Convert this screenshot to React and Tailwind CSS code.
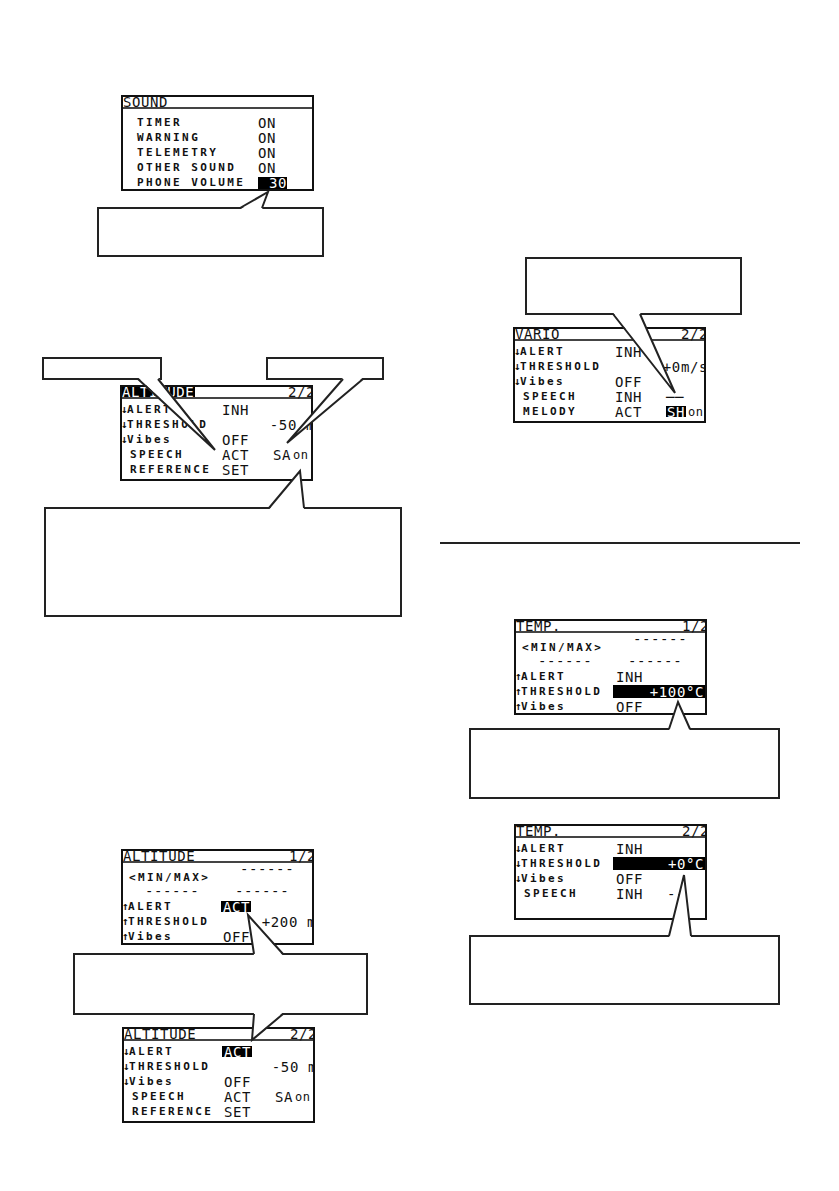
import React from 'react';

const MONO = "font-['DejaVu_Sans_Mono',monospace]";
const LABEL = `${MONO} text-[11px] font-bold tracking-[2.4px] leading-none text-[#111]`;
const VALUE = `${MONO} text-[14px] tracking-[0.6px] leading-none text-[#111]`;
const SMALL = `${MONO} text-[12px] tracking-[0.5px] leading-none text-[#111]`;

// LCD screen frame with the title bar
const Screen = ({ title, page, inverted, className = '', children }) => (
  <div className={`w-[193px] h-[96px] border-2 border-[#111] bg-white overflow-hidden shrink-0 ${className}`}>
    <div className="h-[12px] border-b-2 border-[#444] flex items-end justify-between">
      <span className={`${VALUE} ${inverted ? 'bg-black !text-white pr-[1px]' : ''} h-[11px] flex items-center`}>{title}</span>
      {page && <span className={`${VALUE} h-[11px] flex items-center -mr-[4px]`}>{page}</span>}
    </div>
    {children}
  </div>
);

const Row = ({ arrow, label, value, hl, bar, right, rightAlign, sub, subHl }) => (
  <div className="h-[15px] flex items-center whitespace-nowrap">
    {arrow ? (
      <span className={`${MONO} text-[11px] font-bold leading-none w-[5px] -ml-[1px] mr-[1px] text-[#111]`}>{arrow}</span>
    ) : (
      <span className="w-[8px]" />
    )}
    <span className={`${LABEL} ${arrow ? 'w-[95px]' : 'w-[92px]'}`}>{label}</span>
    {bar ? (
      <span className={`${VALUE} flex-1 -ml-[3px] h-[13px] bg-black !text-white flex items-center justify-end pr-[1px]`}>{bar}</span>
    ) : (
      <>
        <span className="w-[51px] flex items-center">
          {value && (
            <span className={`${VALUE} ${hl ? 'bg-black !text-white -ml-[2px] pl-[2px] pr-[1px] h-[11px] flex items-center' : ''}`}>{value}</span>
          )}
        </span>
        <span className={`flex-1 flex items-center ${rightAlign ? 'justify-end -mr-[4px]' : ''}`}>
          {right && (
            <span className={`${VALUE} ${subHl ? 'bg-black !text-white px-[1px] h-[11px] flex items-center' : ''}`}>{right}</span>
          )}
          {sub && <span className={`${SMALL} ml-[2px]`}>{sub}</span>}
        </span>
      </>
    )}
  </div>
);

const SoundRow = ({ label, value, hl }) => (
  <div className="h-[15px] flex items-center whitespace-nowrap pl-[14px]">
    <span className={`${LABEL} w-[121px]`}>{label}</span>
    {hl ? (
      <span className={`${VALUE} bg-black !text-white w-[29px] h-[12px] flex items-center justify-end`}>{value}</span>
    ) : (
      <span className={VALUE}>{value}</span>
    )}
  </div>
);

const MinMax = () => (
  <>
    <div className={`mt-[2px] h-[8px] flex items-center pl-[117px] ${VALUE}`}>------</div>
    <div className={`h-[8px] flex items-center pl-[6px] ${LABEL}`}>&lt;MIN/MAX&gt;</div>
    <div className={`mt-[6px] h-[8px] flex items-center ${VALUE}`}>
      <span className="ml-[22px] w-[90px]">------</span>
      <span>------</span>
    </div>
  </>
);

const Callout = ({ className = '' }) => (
  <div className={`border-2 border-[#222] bg-white shrink-0 ${className}`} />
);

// speech-bubble tails, drawn over screens and boxes
const tails = [
  { x1: 240, x2: 262, by: 207, ax: 268, ay: 192, up: true },
  { x1: 138, x2: 158, by: 380, ax: 215, ay: 450, up: false },
  { x1: 343, x2: 363, by: 380, ax: 287, ay: 443, up: false },
  { x1: 269, x2: 304, by: 507, ax: 300, ay: 471, up: true },
  { x1: 613, x2: 640, by: 315, ax: 675, ay: 393, up: false },
  { x1: 669, x2: 690, by: 728, ax: 678, ay: 702, up: true },
  { x1: 669, x2: 691, by: 935, ax: 684, ay: 875, up: true },
  { x1: 254, x2: 283, by: 953, ax: 248, ay: 915, up: true },
  { x1: 254, x2: 283, by: 1015, ax: 252, ay: 1040, up: false },
];

const Tails = () => (
  <svg className="absolute inset-0 pointer-events-none" width="839" height="1191" viewBox="0 0 839 1191">
    {tails.map((t, i) => {
      const fy = t.up ? t.by + 2.5 : t.by - 2.5;
      const sy = t.up ? t.by + 1 : t.by - 1;
      return (
        <g key={i}>
          <polygon points={`${t.x1},${fy} ${t.ax},${t.ay} ${t.x2},${fy}`} fill="#fff" />
          <polyline
            points={`${t.x1},${sy} ${t.ax},${t.ay} ${t.x2},${sy}`}
            fill="none"
            stroke="#222"
            strokeWidth="2"
            strokeLinejoin="miter"
          />
        </g>
      );
    })}
  </svg>
);

export default function App() {
  return (
    <div className="relative w-[839px] h-[1191px] bg-white overflow-hidden flex">
      {/* left column */}
      <div className="w-[420px] flex flex-col shrink-0">
        <Screen title="SOUND" className="mt-[95px] ml-[121px]">
          <div className="pt-[6px]">
            <SoundRow label="TIMER" value="ON" />
            <SoundRow label="WARNING" value="ON" />
            <SoundRow label="TELEMETRY" value="ON" />
            <SoundRow label="OTHER SOUND" value="ON" />
            <SoundRow label="PHONE VOLUME" value="30" hl />
          </div>
        </Screen>
        <Callout className="mt-[16px] ml-[97px] w-[227px] h-[50px]" />

        <div className="mt-[100px] flex">
          <Callout className="ml-[42px] w-[120px] h-[23px]" />
          <Callout className="ml-[104px] w-[118px] h-[23px]" />
        </div>
        <Screen title="ALTITUDE" page="2/2" inverted className="mt-[5px] ml-[120px]">
          <div className="pt-[3px]">
            <Row arrow="↓" label="ALERT" value="INH" />
            <Row arrow="↓" label="THRESHOLD" right="-50 m" rightAlign />
            <Row arrow="↓" label="Vibes" value="OFF" />
            <Row label="SPEECH" value="ACT" right="SA" sub="on" />
            <Row label="REFERENCE" value="SET" />
          </div>
        </Screen>
        <Callout className="mt-[26px] ml-[44px] w-[358px] h-[110px]" />

        <Screen title="ALTITUDE" page="1/2" className="mt-[232px] ml-[121px]">
          <MinMax />
          <div className="mt-[4px]">
            <Row arrow="↑" label="ALERT" value="ACT" hl />
            <Row arrow="↑" label="THRESHOLD" right="+200 m" rightAlign />
            <Row arrow="↑" label="Vibes" value="OFF" />
          </div>
        </Screen>
        <Callout className="mt-[8px] ml-[73px] w-[295px] h-[62px]" />
        <Screen title="ALTITUDE" page="2/2" className="mt-[12px] ml-[122px]">
          <div className="pt-[3px]">
            <Row arrow="↓" label="ALERT" value="ACT" hl />
            <Row arrow="↓" label="THRESHOLD" right="-50 m" rightAlign />
            <Row arrow="↓" label="Vibes" value="OFF" />
            <Row label="SPEECH" value="ACT" right="SA" sub="on" />
            <Row label="REFERENCE" value="SET" />
          </div>
        </Screen>
      </div>

      {/* right column */}
      <div className="flex-1 flex flex-col">
        <Callout className="mt-[257px] ml-[105px] w-[217px] h-[58px]" />
        <Screen title="VARIO" page="2/2" className="mt-[12px] ml-[93px]">
          <div className="pt-[3px]">
            <Row arrow="↓" label="ALERT" value="INH" />
            <Row arrow="↓" label="THRESHOLD" right="+0m/s" rightAlign />
            <Row arrow="↓" label="Vibes" value="OFF" />
            <Row label="SPEECH" value="INH" right="──" />
            <Row label="MELODY" value="ACT" right="SH" subHl sub="on" />
          </div>
        </Screen>

        <div className="mt-[119px] ml-[20px] w-[360px] h-[2px] bg-[#222]" />

        <Screen title="TEMP." page="1/2" className="mt-[75px] ml-[94px]">
          <MinMax />
          <div className="mt-[4px]">
            <Row arrow="↑" label="ALERT" value="INH" />
            <Row arrow="↑" label="THRESHOLD" bar="+100°C" />
            <Row arrow="↑" label="Vibes" value="OFF" />
          </div>
        </Screen>
        <Callout className="mt-[13px] ml-[49px] w-[311px] h-[71px]" />

        <Screen title="TEMP." page="2/2" className="mt-[25px] ml-[94px]">
          <div className="pt-[3px]">
            <Row arrow="↓" label="ALERT" value="INH" />
            <Row arrow="↓" label="THRESHOLD" bar="+0°C" />
            <Row arrow="↓" label="Vibes" value="OFF" />
            <Row label="SPEECH" value="INH" right="--" />
          </div>
        </Screen>
        <Callout className="mt-[15px] ml-[49px] w-[311px] h-[70px]" />
      </div>

      <Tails />
    </div>
  );
}
